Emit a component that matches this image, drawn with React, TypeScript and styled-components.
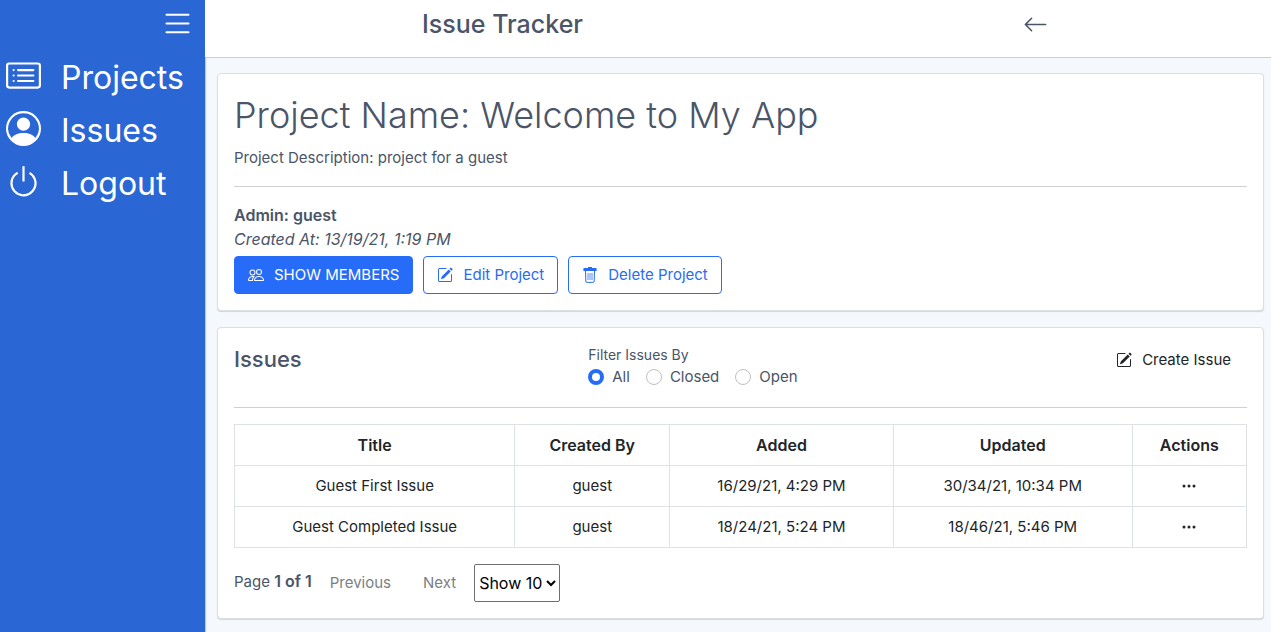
import React, { useState } from "react";
import styled, { createGlobalStyle, css } from "styled-components";
import {
  BsArrowLeft,
  BsCardList,
  BsList,
  BsPencilSquare,
  BsPeople,
  BsPersonCircle,
  BsPower,
  BsThreeDots,
} from "react-icons/bs";

const GlobalStyle = createGlobalStyle`
  *, *::before, *::after { box-sizing: border-box; }
  body {
    margin: 0;
    font-family: Inter, "Liberation Sans", sans-serif;
    font-size: 15px;
    line-height: 24px;
    color: #4a5568;
    background: #f5f8fc;
  }
  button, input, select { font: inherit; }
  strong { font-weight: 600; }
`;

const Shell = styled.div`
  display: flex;
  min-height: 100vh;
`;

const Sidebar = styled.aside`
  flex: 0 0 205px;
  background: #2a67d5;
  box-shadow: 1px 0 1px rgba(0, 0, 0, 0.2);
`;

const MenuRow = styled.div`
  display: flex;
  justify-content: flex-end;
  padding: 6px 10px 10px;
`;

const IconButton = styled.button`
  display: flex;
  padding: 0;
  border: 0;
  background: none;
  color: inherit;
  cursor: pointer;
`;

const MenuButton = styled(IconButton)`
  color: #fff;
`;

const NavList = styled.ul`
  list-style: none;
  margin: 0;
  padding: 0 6px;
`;

const NavLink = styled.a`
  display: flex;
  align-items: center;
  gap: 20px;
  height: 53px;
  font-size: 32px;
  color: #fff;
  text-decoration: none;
  svg { margin-bottom: 4px; }
`;

const Content = styled.div`
  flex: 1;
  min-width: 0;
`;

const Header = styled.header`
  display: flex;
  justify-content: space-around;
  align-items: center;
  padding: 8px 0 16px;
  background: #fff;
  border-bottom: 1px solid #ccced1;
`;

const AppTitle = styled.h1`
  margin: 0;
  font-size: 25px;
  line-height: 33px;
  font-weight: 500;
`;

const BackButton = styled(IconButton)`
  padding: 0 6px;
`;

const Main = styled.main`
  display: flex;
  flex-direction: column;
  gap: 16px;
  padding: 15px 7px 12px 12px;
`;

const Card = styled.section`
  padding: 16px;
  background: #fff;
  border: 1px solid #dcdfe2;
  border-radius: 4px;
  box-shadow: 0 1px 1px rgba(0, 0, 0, 0.14);
`;

const ProjectName = styled.h2`
  margin: 0 0 6px;
  font-size: 36px;
  line-height: 50px;
  font-weight: 300;
`;

const Text = styled.p`
  margin: 0;
`;

const MetaText = styled(Text)`
  font-size: 16px;
`;

const Divider = styled.hr`
  margin: 16px 0;
  border: 0;
  border-top: 1px solid #cfd1d4;
`;

const ButtonRow = styled.div`
  display: flex;
  gap: 10px;
  margin-top: 5px;
`;

const Button = styled.button<{ $variant?: "solid" | "outline" }>`
  display: inline-flex;
  align-items: center;
  gap: 10px;
  padding: 6px 13px;
  border: 1px solid transparent;
  border-radius: 4px;
  background: none;
  color: #212529;
  cursor: pointer;
  svg { width: 16px; height: 16px; }
  &:disabled { color: #7a7f84; cursor: default; }
  ${({ $variant }) => $variant === "solid" && css`
    background: #276cf8;
    border-color: #276cf8;
    color: #fff;
  `}
  ${({ $variant }) => $variant === "outline" && css`
    border-color: #276cf8;
    color: #276cf8;
  `}
`;

const CreateButton = styled(Button)`
  padding: 3px 15px;
`;

const IssuesBar = styled.div`
  display: flex;
  justify-content: space-between;
  align-items: flex-start;
`;

const SectionTitle = styled.h3`
  margin: 0;
  font-size: 22px;
  line-height: 30px;
  font-weight: 500;
`;

const FilterGroup = styled.fieldset`
  margin: 0;
  padding: 0 0 2px;
  border: 0;
`;

const FilterLegend = styled.legend`
  padding: 0;
  font-size: 14px;
  line-height: 21px;
`;

const FilterOptions = styled.div`
  display: flex;
`;

const FilterLabel = styled.label`
  display: flex;
  align-items: center;
  gap: 8px;
  margin-right: 16px;
`;

const Radio = styled.input`
  appearance: none;
  width: 16px;
  height: 16px;
  margin: 0;
  border: 1px solid #bfbfbf;
  border-radius: 50%;
  background: #fff;
  &:checked { border: 4px solid #276cf8; }
`;

const Table = styled.table`
  width: 100%;
  margin-bottom: 16px;
  table-layout: fixed;
  border-collapse: collapse;
  color: #212529;
  text-align: center;
`;

const Col = styled.col<{ $share: number }>`
  width: ${({ $share }) => $share}%;
`;

const Cell = styled.td`
  padding: 8px;
  border: 1px solid #dee2e6;
`;

const HeadCell = styled(Cell).attrs({ as: "th", scope: "col" })`
  font-size: 16px;
  font-weight: 600;
`;

const RowMenu = styled(IconButton)`
  margin: 0 auto;
  svg { width: 16px; height: 16px; }
`;

const Pager = styled.div`
  display: flex;
  align-items: center;
  gap: 4px;
`;

const PageStatus = styled(Text)`
  padding-bottom: 4px;
  strong { font-size: 16px; }
`;

const PageSize = styled.select`
  height: 38px;
  font-size: 16px;
  border: 1px solid #6f6f6f;
  border-radius: 2px;
  background: #fff;
  color: #000;
`;

const TrashIcon = () => (
  <svg viewBox="0 0 16 16" fill="none" stroke="currentColor" aria-hidden="true">
    <path d="M6 0h4v1h4c.4 0 .6.2.6.6V4H1.400V1.600c0-.4.2-.6.6-.6h4z" fill="currentColor" stroke="none" />
    <path d="M3.500 4l.3 10c0 .9.500 1.400 1.300 1.400h5.800c.8 0 1.300-.5 1.300-1.400l.3-10" />
    <path d="M6 6v7M8 6v7M10 6v7" strokeWidth=".8" />
  </svg>
);

const navItems = [
  { label: "Projects", Icon: BsCardList },
  { label: "Issues", Icon: BsPersonCircle },
  { label: "Logout", Icon: BsPower },
];

const columns = [
  { label: "Title", share: 27.7 },
  { label: "Created By", share: 15.3 },
  { label: "Added", share: 22.1 },
  { label: "Updated", share: 23.6 },
  { label: "Actions", share: 11.3 },
];

const issues = [
  { title: "Guest First Issue", by: "guest", added: "16/29/21, 4:29 PM", updated: "30/34/21, 10:34 PM" },
  { title: "Guest Completed Issue", by: "guest", added: "18/24/21, 5:24 PM", updated: "18/46/21, 5:46 PM" },
];

export default function App() {
  const [filter, setFilter] = useState("All");
  return (
    <>
      <GlobalStyle />
      <Shell>
        <Sidebar>
          <MenuRow>
            <MenuButton aria-label="Toggle menu"><BsList size={35} /></MenuButton>
          </MenuRow>
          <nav>
            <NavList>
              {navItems.map(({ label, Icon }) => (
                <li key={label}>
                  <NavLink href="#"><Icon size={35} />{label}</NavLink>
                </li>
              ))}
            </NavList>
          </nav>
        </Sidebar>
        <Content>
          <Header>
            <AppTitle>Issue Tracker</AppTitle>
            <BackButton aria-label="Go back"><BsArrowLeft size={25} /></BackButton>
          </Header>
          <Main>
            <Card>
              <ProjectName>Project Name: Welcome to My App</ProjectName>
              <Text>Project Description: project for a guest</Text>
              <Divider />
              <MetaText><strong>Admin: guest</strong></MetaText>
              <MetaText><em>Created At: 13/19/21, 1:19 PM</em></MetaText>
              <ButtonRow>
                <Button $variant="solid"><BsPeople />SHOW MEMBERS</Button>
                <Button $variant="outline"><BsPencilSquare />Edit Project</Button>
                <Button $variant="outline"><TrashIcon />Delete Project</Button>
              </ButtonRow>
            </Card>
            <Card>
              <IssuesBar>
                <SectionTitle>Issues</SectionTitle>
                <FilterGroup>
                  <FilterLegend>Filter Issues By</FilterLegend>
                  <FilterOptions>
                    {["All", "Closed", "Open"].map((name) => (
                      <FilterLabel key={name}>
                        <Radio type="radio" name="filter" checked={filter === name} onChange={() => setFilter(name)} />
                        {name}
                      </FilterLabel>
                    ))}
                  </FilterOptions>
                </FilterGroup>
                <CreateButton><BsPencilSquare />Create Issue</CreateButton>
              </IssuesBar>
              <Divider />
              <Table>
                <colgroup>
                  {columns.map((c) => <Col key={c.label} $share={c.share} />)}
                </colgroup>
                <thead>
                  <tr>{columns.map((c) => <HeadCell key={c.label}>{c.label}</HeadCell>)}</tr>
                </thead>
                <tbody>
                  {issues.map((issue) => (
                    <tr key={issue.title}>
                      <Cell>{issue.title}</Cell>
                      <Cell>{issue.by}</Cell>
                      <Cell>{issue.added}</Cell>
                      <Cell>{issue.updated}</Cell>
                      <Cell><RowMenu aria-label="Issue actions"><BsThreeDots /></RowMenu></Cell>
                    </tr>
                  ))}
                </tbody>
              </Table>
              <Pager>
                <PageStatus>Page <strong>1 of 1</strong></PageStatus>
                <Button disabled>Previous</Button>
                <Button disabled>Next</Button>
                <PageSize aria-label="Rows per page"><option>Show 10</option></PageSize>
              </Pager>
            </Card>
          </Main>
        </Content>
      </Shell>
    </>
  );
}
